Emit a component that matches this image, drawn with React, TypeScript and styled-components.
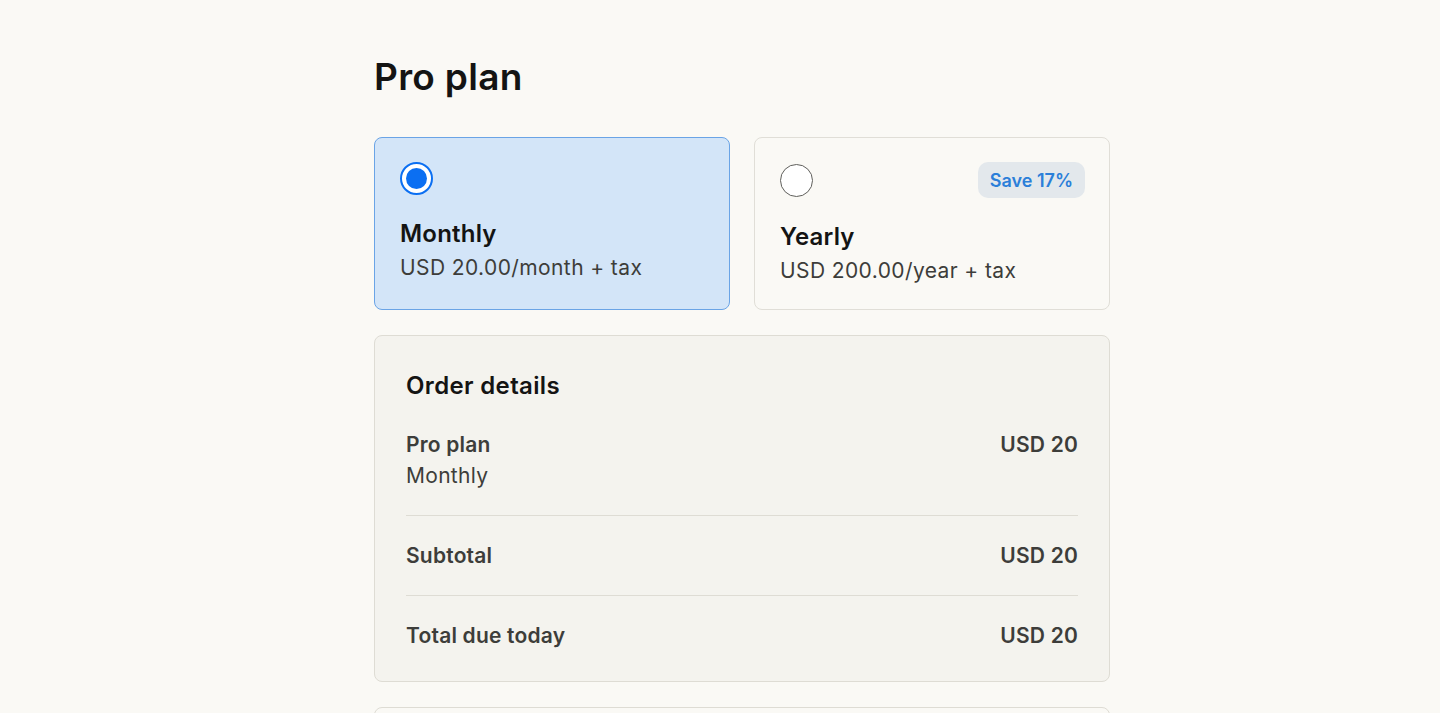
import React from "react";
import styled, { createGlobalStyle } from "styled-components";

const Global = createGlobalStyle`
  html, body { margin: 0; padding: 0; background: #faf9f5; }
  body { font-family: Inter, "Noto Sans", sans-serif; color: #141413; -webkit-font-smoothing: antialiased; }
  * { box-sizing: border-box; }
`;

const Shell = styled.div`
  padding-left: 44px;
`;

const Page = styled.main`
  width: 736px;
  margin: 0 auto;
  padding-top: 55px;
`;

const Title = styled.h1`
  margin: 0;
  font-size: 37px;
  line-height: 44px;
  font-weight: 600;
  letter-spacing: 0.3px;
  color: #141413;
`;

const PlanGrid = styled.div`
  display: grid;
  grid-template-columns: 1fr 1fr;
  gap: 24px;
  margin-top: 38px;
`;

const PlanCard = styled.label<{ $selected?: boolean }>`
  display: flex;
  flex-direction: column;
  padding: 24px 24px 24px 25px;
  border-radius: 8px;
  border: 1px solid ${(p) => (p.$selected ? "#6aa4e6" : "#e0ded7")};
  background: ${(p) => (p.$selected ? "#d3e5f8" : "#faf9f5")};
  cursor: pointer;
`;

const CardTop = styled.div`
  display: flex;
  align-items: center;
  justify-content: space-between;
  min-height: 32px;
`;

const Radio = styled.span<{ $checked?: boolean }>`
  width: 33px;
  height: 33px;
  border-radius: 50%;
  background: #fff;
  border: ${(p) => (p.$checked ? "2px solid #0b6ff2" : "1.5px solid #5f5f5b")};
  display: flex;
  align-items: center;
  justify-content: center;
  &::after {
    content: "";
    display: ${(p) => (p.$checked ? "block" : "none")};
    width: 21px;
    height: 21px;
    border-radius: 50%;
    background: #0b6ff2;
  }
`;

const Badge = styled.span`
  height: 36px;
  padding: 0 12px;
  display: inline-flex;
  align-items: center;
  border-radius: 10px;
  background: #e3e8ec;
  color: #2b7fd9;
  font-size: 18px;
  font-weight: 600;
`;

const PlanName = styled.div`
  margin-top: 23px;
  font-size: 24px;
  line-height: 32px;
  font-weight: 600;
  letter-spacing: 0.2px;
  color: #141413;
`;

const PlanPrice = styled.div`
  margin-top: 4px;
  font-size: 21px;
  line-height: 28px;
  letter-spacing: 0.4px;
  color: #3d3d3a;
`;

const OrderBox = styled.section`
  margin-top: 25px;
  padding: 34px 31px 30px 31px;
  border: 1px solid #dedcd4;
  border-radius: 8px;
  background: #f4f3ee;
`;

const OrderTitle = styled.h2`
  margin: 0;
  font-size: 24px;
  line-height: 32px;
  font-weight: 600;
  letter-spacing: 0.35px;
  color: #141413;
`;

const Rows = styled.div`
  margin-top: 27px;
`;

const Row = styled.div<{ $first?: boolean }>`
  display: flex;
  justify-content: space-between;
  align-items: flex-start;
  padding: ${(p) => (p.$first ? "0 0 24px" : "24px 0 24px")};
  border-top: ${(p) => (p.$first ? "none" : "1px solid #dedcd4")};
  &:last-child { padding-bottom: 0; }
`;

const Label = styled.div`
  display: flex;
  flex-direction: column;
`;

const Strong = styled.span`
  font-size: 21px;
  line-height: 31px;
  font-weight: 600;
  letter-spacing: 0.2px;
  color: #3d3d3a;
`;

const Sub = styled.span`
  font-size: 21px;
  line-height: 31px;
  letter-spacing: 0.3px;
  color: #3d3d3a;
`;

const NextBox = styled.section`
  margin-top: 25px;
  height: 60px;
  border: 1px solid #dedcd4;
  border-radius: 8px;
  background: #faf9f5;
`;

export default function App() {
  return (
    <>
      <Global />
      <Shell>
        <Page>
          <Title>Pro plan</Title>
          <PlanGrid>
            <PlanCard $selected>
              <CardTop>
                <Radio $checked />
              </CardTop>
              <PlanName>Monthly</PlanName>
              <PlanPrice>USD 20.00/month + tax</PlanPrice>
            </PlanCard>
            <PlanCard>
              <CardTop>
                <Radio />
                <Badge>Save 17%</Badge>
              </CardTop>
              <PlanName>Yearly</PlanName>
              <PlanPrice>USD 200.00/year + tax</PlanPrice>
            </PlanCard>
          </PlanGrid>
          <OrderBox>
            <OrderTitle>Order details</OrderTitle>
            <Rows>
              <Row $first>
                <Label>
                  <Strong>Pro plan</Strong>
                  <Sub>Monthly</Sub>
                </Label>
                <Strong>USD 20</Strong>
              </Row>
              <Row>
                <Strong>Subtotal</Strong>
                <Strong>USD 20</Strong>
              </Row>
              <Row>
                <Strong>Total due today</Strong>
                <Strong>USD 20</Strong>
              </Row>
            </Rows>
          </OrderBox>
          <NextBox />
        </Page>
      </Shell>
    </>
  );
}
